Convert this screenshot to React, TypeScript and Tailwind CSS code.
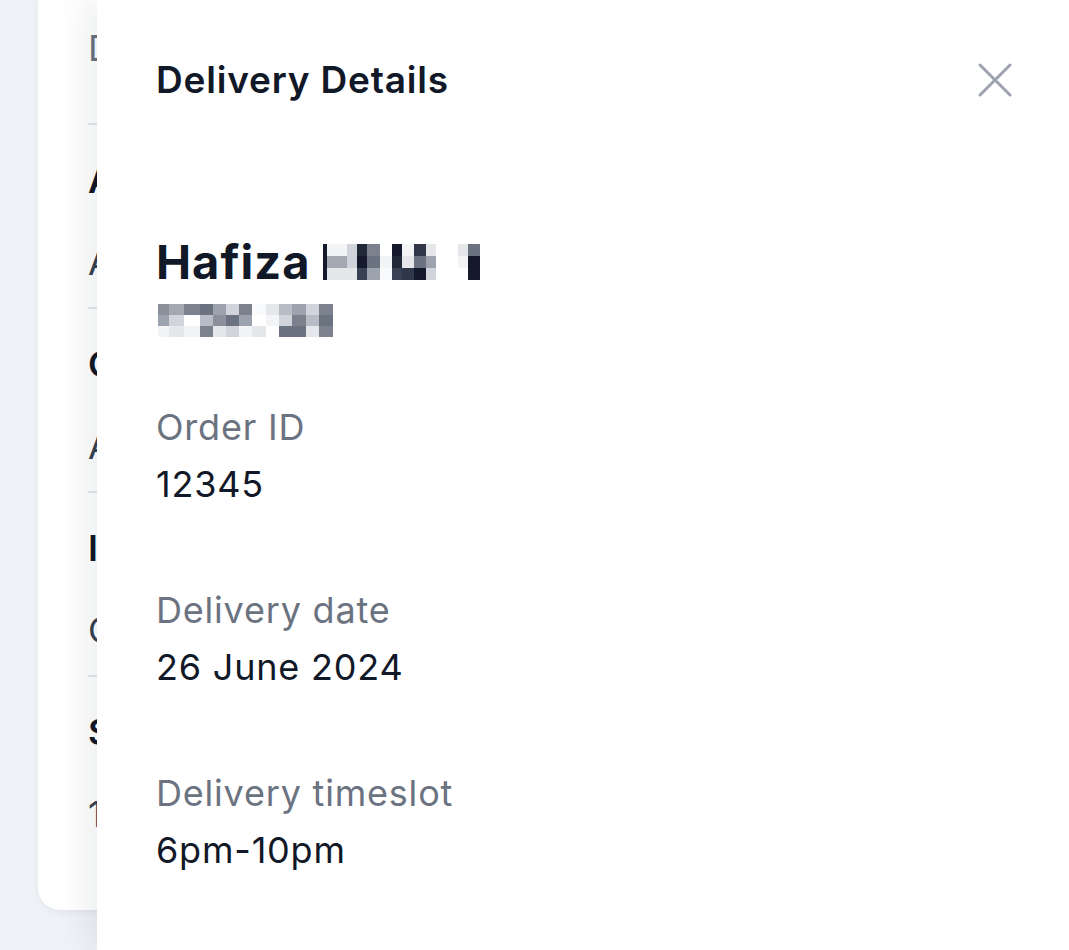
import React from 'react';

type Cell = { w: number; c: [string, string, string] };

// pixelated redaction over the surname
const nameMosaic: Cell[] = [
  { w: 20, c: ['#f3f4f6', '#a3a8b3', '#e5e7eb'] },
  { w: 10, c: ['#d1d5db', '#cfd3da', '#e5e7eb'] },
  { w: 10, c: ['#1f2937', '#141a2b', '#374151'] },
  { w: 13, c: ['#7b818d', '#6b7280', '#9ca3af'] },
  { w: 12, c: ['#ffffff', '#f3f4f6', '#f9fafb'] },
  { w: 10, c: ['#141a2b', '#1f2937', '#374151'] },
  { w: 12, c: ['#f3f4f6', '#e5e7eb', '#2f3748'] },
  { w: 12, c: ['#2f3748', '#6b7280', '#141a2b'] },
  { w: 10, c: ['#e5e7eb', '#9ca3af', '#d1d5db'] },
  { w: 22, c: ['#ffffff', '#ffffff', '#ffffff'] },
  { w: 10, c: ['#e5e7eb', '#f3f4f6', '#ffffff'] },
  { w: 12, c: ['#6b7280', '#141a2b', '#141a2b'] },
];

const phoneMosaic: Cell[] = [
  { w: 11, c: ['#8b909b', '#9ca3af', '#f3f4f6'] },
  { w: 15, c: ['#a3a8b3', '#d1d5db', '#e5e7eb'] },
  { w: 16, c: ['#7b818d', '#ffffff', '#f3f4f6'] },
  { w: 13, c: ['#6b7280', '#b8bcc6', '#7b818d'] },
  { w: 13, c: ['#9ca3af', '#8b909b', '#e5e7eb'] },
  { w: 13, c: ['#d1d5db', '#6b7280', '#d1d5db'] },
  { w: 13, c: ['#7b818d', '#9ca3af', '#f3f4f6'] },
  { w: 14, c: ['#f9fafb', '#ffffff', '#e5e7eb'] },
  { w: 13, c: ['#e5e7eb', '#f3f4f6', '#ffffff'] },
  { w: 13, c: ['#b8bcc6', '#d1d5db', '#6b7280'] },
  { w: 14, c: ['#9ca3af', '#7b818d', '#6b7280'] },
  { w: 13, c: ['#d1d5db', '#b8bcc6', '#e5e7eb'] },
  { w: 14, c: ['#7b818d', '#6b7280', '#7b818d'] },
];

const Mosaic: React.FC<{ cells: Cell[]; rowH: number }> = ({ cells, rowH }) => (
  <span className="inline-flex align-middle">
    {cells.map((cell, i) => (
      <span key={i} className="flex flex-col" style={{ width: cell.w }}>
        {cell.c.map((col, j) => (
          <span key={j} style={{ height: rowH, backgroundColor: col }} />
        ))}
      </span>
    ))}
  </span>
);

const cardSections = [
  { title: 'Address', sub: 'Apartment 4B, Jalan Ampang' },
  { title: 'Contact', sub: 'Available after 6pm' },
  { title: 'Items', sub: 'Chicken rice set x2' },
  { title: 'Subtotal', sub: '1 item · RM 24.00' },
];

const fields = [
  { label: 'Order ID', value: '12345' },
  { label: 'Delivery date', value: '26 June 2024' },
  { label: 'Delivery timeslot', value: '6pm-10pm' },
];

export default function App() {
  return (
    <div
      className="relative h-[950px] w-full overflow-hidden bg-[#eff2f7]"
      style={{ fontFamily: 'Inter, "Noto Sans", sans-serif' }}
    >
      {/* page card behind the drawer */}
      <div className="ml-[38px] w-[1000px] rounded-b-[22px] bg-white pl-[50px] text-[36px] tracking-[0.8px] shadow-[0_2px_8px_rgba(15,23,42,0.06)]">
        <div className="h-[123px] pt-[23px] leading-[50px] text-[#6b7280]">Details</div>
        {cardSections.map((s, i) => (
          <div key={s.title} className="border-t-2 border-[#e5e7eb]">
            <div className="pt-[30px] font-semibold leading-[50px] text-[#111827]">{s.title}</div>
            <div
              className={`mt-[32px] leading-[50px] text-[#374151] ${i === cardSections.length - 1 ? 'pb-[71px]' : 'pb-[20px]'}`}
            >
              {s.sub}
            </div>
          </div>
        ))}
      </div>

      {/* drawer */}
      <div className="absolute inset-y-0 left-[97px] right-0 bg-white pl-[59px] pr-[57px] shadow-[-12px_0_30px_rgba(15,23,42,0.07)]">
        <div className="flex items-center justify-between pt-[55px]">
          <h2 className="text-[37px] font-semibold leading-[50px] tracking-[0.8px] text-[#111827]">Delivery Details</h2>
          <button className="flex h-[34px] w-[34px] items-center justify-center">
            <svg width="34" height="34" viewBox="0 0 34 34" fill="none" stroke="#9ca3af" strokeWidth="3" strokeLinecap="round">
              <path d="M2 2L32 32M32 2L2 32" />
            </svg>
          </button>
        </div>

        <div className="mt-[128px] flex items-center text-[47px] font-bold leading-[58px] tracking-[1px] text-[#111827]">
          <span>Hafiza&nbsp;</span>
          <span className="inline-block h-[36px] w-[4px] self-center bg-[#141a2b]" />
          <Mosaic cells={nameMosaic} rowH={12} />
        </div>
        <div className="flex h-[58px] items-center pl-[2px]">
          <Mosaic cells={phoneMosaic} rowH={11} />
        </div>

        <div className="mt-[50px] flex flex-col gap-[69px] text-[36px] leading-[57px] tracking-[0.8px]">
          {fields.map((f) => (
            <div key={f.label}>
              <div className="text-[#6b7280]">{f.label}</div>
              <div className="text-[#111827]">{f.value}</div>
            </div>
          ))}
        </div>
      </div>
    </div>
  );
}
